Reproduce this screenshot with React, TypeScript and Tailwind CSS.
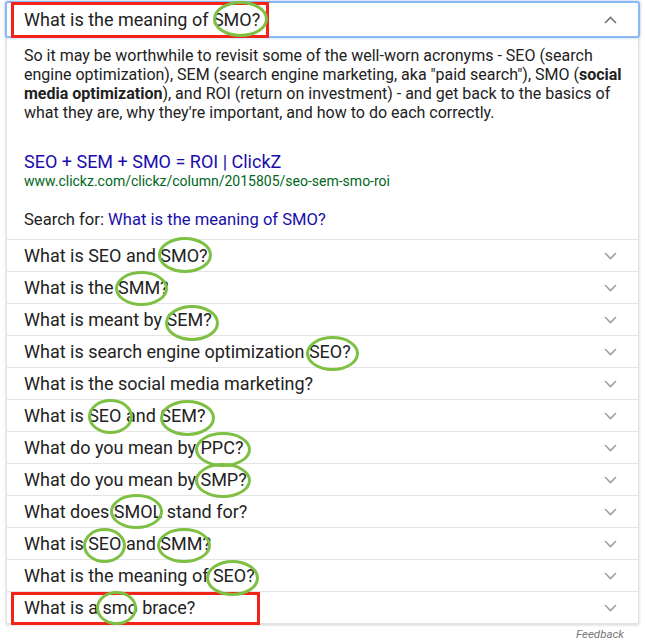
import React from 'react'

const rows = [
  'What is SEO and SMO?',
  'What is the SMM?',
  'What is meant by SEM?',
  'What is search engine optimization SEO?',
  'What is the social media marketing?',
  'What is SEO and SEM?',
  'What do you mean by PPC?',
  'What do you mean by SMP?',
  'What does SMOL stand for?',
  'What is SEO and SMM?',
  'What is the meaning of SEO?',
  'What is a smo brace?',
]

// green marker circles drawn over the screenshot: [left, top, width, height]
const circles: [number, number, number, number][] = [
  [213, 1, 55, 36],
  [158, 237, 54, 36],
  [115, 271, 53, 35],
  [165, 305, 54, 36],
  [306, 336, 53, 35],
  [88, 399, 45, 35],
  [160, 400, 55, 36],
  [195, 432, 56, 35],
  [195, 463, 56, 35],
  [110, 494, 53, 35],
  [83, 528, 43, 35],
  [157, 528, 54, 35],
  [206, 560, 53, 36],
  [96, 591, 41, 34],
]

const Chevron = ({ up }: { up?: boolean }) => (
  <svg width="13" height="8" viewBox="0 0 13 8" className="shrink-0">
    <polyline
      points={up ? '1,7 6.5,1.5 12,7' : '1,1 6.5,6.5 12,1'}
      fill="none"
      stroke={up ? '#757575' : '#a0a0a0'}
      strokeWidth="1.6"
    />
  </svg>
)

export default function App() {
  return (
    <div className="relative w-[645px] h-[643px] bg-white overflow-hidden font-['Roboto',sans-serif] text-[#222]">
      <div className="ml-[6px] w-[633px] border-x border-b border-[#e2e2e2] shadow-[0_1px_3px_rgba(0,0,0,0.18)]">
        {/* expanded question */}
        <div className="-mx-[2px] mt-[1px] h-[37px] flex items-center justify-between pl-[19px] pr-[23px] rounded-[3px] ring-2 ring-inset ring-[#8bb9f6] shadow-[0_0_3px_rgba(100,160,240,0.5)]">
          <span className="text-[18px] leading-[22px]">What is the meaning of SMO?</span>
          <Chevron up />
        </div>

        <div className="pl-[17px] pr-[6px] pt-[8px] pb-[10px]">
          <p className="text-[16px] leading-[19px]">
            So it may be worthwhile to revisit some of the well-worn acronyms - SEO (search engine
            optimization), SEM (search engine marketing, aka "paid search"), SMO (<b>social media optimization</b>), and ROI (return on investment) - and get back to the
            basics of what they are, why they're important, and how to do each correctly.
          </p>
          <div className="mt-[30px] text-[18px] leading-[20px] text-[#1a0dab]">
            SEO + SEM + SMO = ROI | ClickZ
          </div>
          <div className="text-[14px] leading-[18px] text-[#006621]">
            www.clickz.com/clickz/column/2015805/seo-sem-smo-roi
          </div>
          <div className="mt-[20px] text-[16.6px] leading-[19px]">
            Search for: <span className="text-[#1a0dab]">What is the meaning of SMO?</span>
          </div>
        </div>

        {rows.map((q) => (
          <div
            key={q}
            className="h-[32px] border-t border-[#e4e4e4] flex items-center justify-between pl-[17px] pr-[21px]"
          >
            <span className="text-[18px] leading-[22px]">{q}</span>
            <Chevron />
          </div>
        ))}
      </div>

      <div className="pr-[21px] pt-[3px] text-right text-[11.5px] leading-[14px] italic text-[#777]">
        Feedback
      </div>

      {/* annotations */}
      <div className="absolute left-[11px] top-[2px] w-[258px] h-[36px] border-[3px] border-[#f4231a]" />
      <div className="absolute left-[11px] top-[592px] w-[249px] h-[33px] border-[3px] border-[#f4231a]" />
      {circles.map(([l, t, w, h], i) => (
        <div
          key={i}
          className="absolute rounded-[50%] border-[3px] border-[#7dc043]"
          style={{ left: l, top: t, width: w, height: h }}
        />
      ))}
    </div>
  )
}
